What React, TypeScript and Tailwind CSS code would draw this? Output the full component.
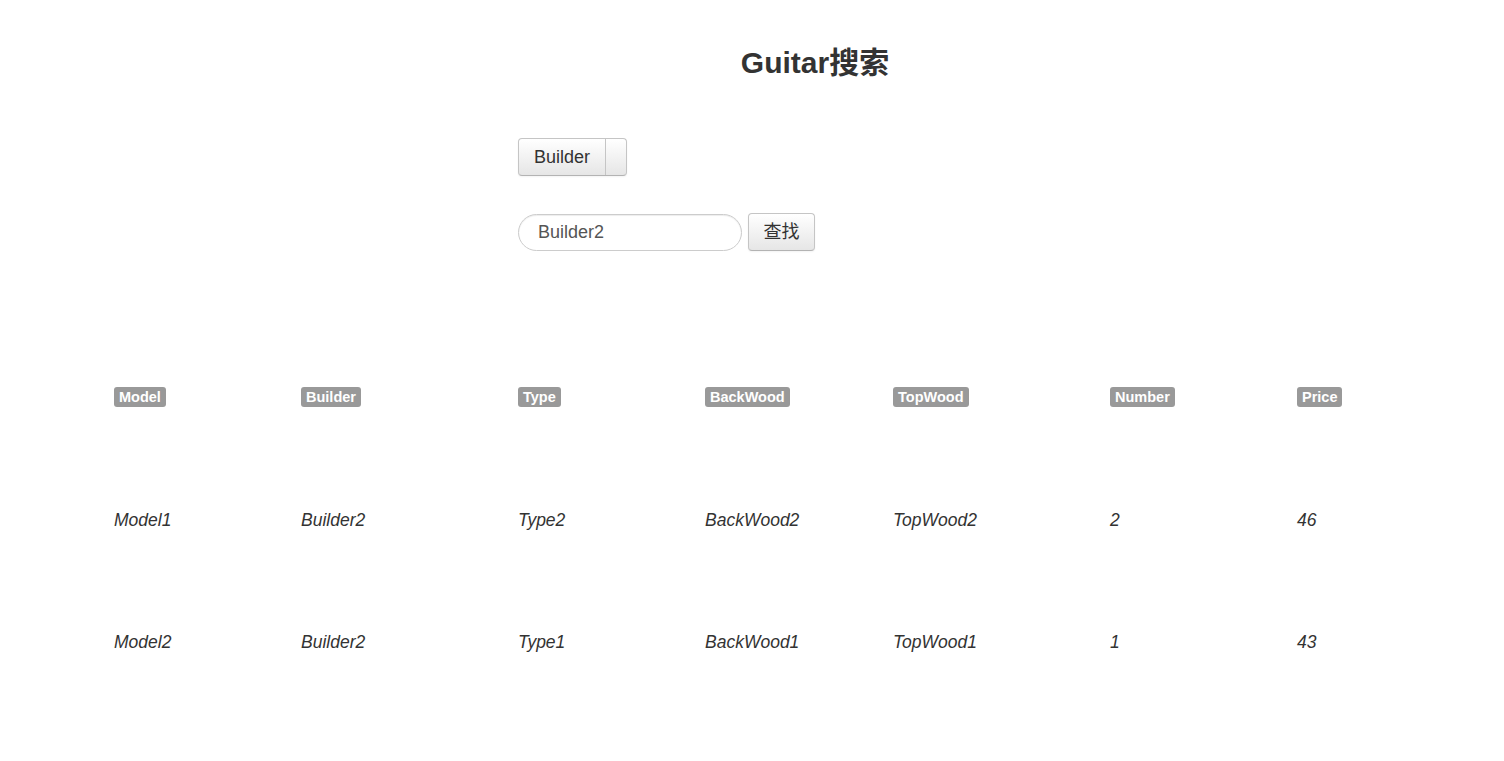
export default function App() {
  const cols = ['Model', 'Builder', 'Type', 'BackWood', 'TopWood', 'Number', 'Price']
  const rows = [
    ['Model1', 'Builder2', 'Type2', 'BackWood2', 'TopWood2', '2', '46'],
    ['Model2', 'Builder2', 'Type1', 'BackWood1', 'TopWood1', '1', '43'],
  ]
  const grid = 'grid grid-cols-[187px_217px_187px_188px_217px_187px_1fr]'

  return (
    <div className="min-h-[761px] bg-white text-[#333] font-['Liberation_Sans','Noto_Sans_CJK_SC',sans-serif]">
      {/* title */}
      <div className="flex justify-center pl-[126px] pt-[42px]">
        <h1 className="text-[30px] font-bold leading-[42px] text-[#333]">Guitar搜索</h1>
      </div>

      {/* form */}
      <div className="ml-[518px] mt-[54px] flex flex-col gap-[37px]">
        <div className="flex">
          <div className="flex h-[38px] rounded-[4px] border border-[#c5c5c5] border-b-[#b3b3b3] bg-gradient-to-b from-white to-[#e6e6e6] shadow-[inset_0_1px_0_rgba(255,255,255,0.2),0_1px_2px_rgba(0,0,0,0.05)]">
            <button className="px-[15px] text-[18px] text-[#333] border-r border-[#c5c5c5]">Builder</button>
            <button className="w-[20px]" />
          </div>
        </div>
        <div className="flex items-center gap-[6px]">
          <input
            defaultValue="Builder2"
            className="h-[37px] w-[224px] rounded-full border border-[#ccc] px-[19px] text-[18px] text-[#555] shadow-[inset_0_1px_1px_rgba(0,0,0,0.075)] outline-none"
          />
          <button className="h-[38px] w-[67px] rounded-[4px] border border-[#c5c5c5] border-b-[#b3b3b3] bg-gradient-to-b from-white to-[#e6e6e6] text-[18px] text-[#333] shadow-[0_1px_2px_rgba(0,0,0,0.05)]">
            查找
          </button>
        </div>
      </div>

      {/* results */}
      <div className="mx-[114px] mt-[134px]">
        <div className={grid + ' h-[125px] items-start'}>
          {cols.map((c) => (
            <div key={c}>
              <span className="inline-block rounded-[3px] bg-[#999] px-[5px] text-[14.5px] font-bold leading-[20px] text-white">
                {c}
              </span>
            </div>
          ))}
        </div>
        {rows.map((r, i) => (
          <div key={i} className={grid + ' h-[122px] items-start'}>
            {r.map((v, j) => (
              <div key={j} className="text-[17.5px] italic leading-[20px] text-[#333]">
                {v}
              </div>
            ))}
          </div>
        ))}
      </div>
    </div>
  )
}
